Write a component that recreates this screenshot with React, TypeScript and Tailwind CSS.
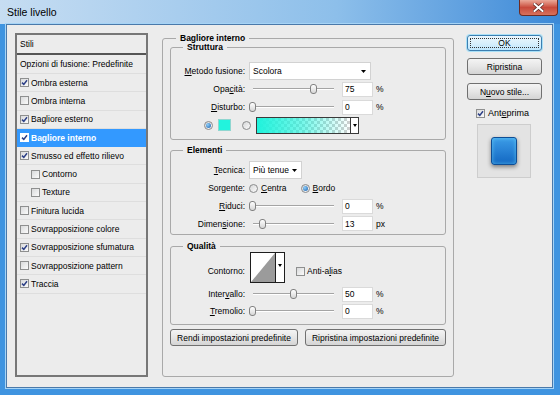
import React from "react";

const Check = ({ on, light }: { on: boolean; light?: boolean }) => (
  <span
    className={
      "w-[9px] h-[9px] shrink-0 flex items-center justify-center border " +
      (light ? "border-white bg-white" : "border-[#8e8f8f] bg-linear-to-br from-[#d9dadb] to-[#fbfbfb]")
    }
  >
    {on && (
      <svg width="7" height="7" viewBox="0 0 7 7">
        <path d="M1 3.6 L2.8 5.4 L6 1.2" stroke="#2c3f86" strokeWidth="1.5" fill="none" />
      </svg>
    )}
  </span>
);

const Radio = ({ on }: { on: boolean }) => (
  <span className="w-[9px] h-[9px] shrink-0 rounded-full border border-[#8a8b8c] bg-linear-to-br from-[#d6d7d8] to-[#fbfbfb] flex items-center justify-center">
    {on && <span className="w-[5px] h-[5px] rounded-full bg-[radial-gradient(circle_at_35%_35%,#8fd0fa,#1a5fae)]" />}
  </span>
);

const Arrow = () => (
  <svg width="5" height="3" viewBox="0 0 5 3" className="shrink-0">
    <path d="M0 0 H5 L2.5 3 Z" fill="#000" />
  </svg>
);

const Slider = ({ pos }: { pos: number }) => (
  <div className="relative w-[89px] h-[14px] shrink-0">
    <div className="absolute left-[4px] right-[4px] top-[6px] h-[2px] border-t border-t-[#a4a4a4] border-b border-b-white" />
    <div
      className="absolute top-[2px] w-[7px] h-[10px] rounded-[3px] border border-[#818181] bg-linear-to-b from-white to-[#d6d6d6]"
      style={{ left: pos }}
    />
  </div>
);

const Num = ({ v, unit }: { v: string; unit: string }) => (
  <div className="flex items-center gap-[3px] ml-[4px]">
    <div className="w-[31px] h-[15px] bg-white border border-[#dadada] pl-[2px] flex items-center">{v}</div>
    <span>{unit}</span>
  </div>
);

const Label = ({ children }: { children: React.ReactNode }) => (
  <span className="w-[74px] shrink-0 text-right mr-[4px]">{children}</span>
);

const Btn = ({ children, cls }: { children: React.ReactNode; cls: string }) => (
  <div
    className={
      "h-[17px] flex items-center justify-center rounded-[3px] border border-[#707070] bg-linear-to-b from-[#f4f4f4] via-[#e6e6e6] to-[#d4d4d4] " +
      cls
    }
  >
    {children}
  </div>
);

const styles: [string, boolean, number, boolean?][] = [
  ["Ombra esterna", true, 0],
  ["Ombra interna", false, 0],
  ["Bagliore esterno", true, 0],
  ["Bagliore interno", true, 0, true],
  ["Smusso ed effetto rilievo", true, 0],
  ["Contorno", false, 1],
  ["Texture", false, 1],
  ["Finitura lucida", false, 0],
  ["Sovrapposizione colore", false, 0],
  ["Sovrapposizione sfumatura", true, 0],
  ["Sovrapposizione pattern", false, 0],
  ["Traccia", true, 0],
];

const legend = "ml-[12px] px-[4px] font-bold leading-[10px]";

export default function App() {
  return (
    <div className="w-[560px] h-[395px] flex flex-col bg-[#3f94e0] text-black text-[8.5px] leading-[10px] font-['Liberation_Sans',Arial,sans-serif] overflow-hidden">
      {/* title bar */}
      <div className="h-[24px] shrink-0 flex items-start justify-between bg-linear-to-r from-[#c6ddf2] via-[#8dbfea] via-60% to-[#3b89d7]">
        <span className="mt-[6px] ml-[7px] text-[10.5px] leading-[12px]">Stile livello</span>
        <div className="mr-[2px] w-[39px] h-[16px] rounded-b-[4px] border border-t-0 border-[#6e2b22] bg-linear-to-b from-[#eaa99a] via-[#c84a3c] to-[#d8715c] flex items-center justify-center">
          <svg width="11" height="9" viewBox="0 0 11 9">
            <path d="M1.5 1 L9.5 8 M9.5 1 L1.5 8" stroke="#5a2620" strokeWidth="3.4" strokeLinecap="square" />
            <path d="M1.5 1 L9.5 8 M9.5 1 L1.5 8" stroke="#fff" strokeWidth="2" strokeLinecap="square" />
          </svg>
        </div>
      </div>

      {/* body */}
      <div className="flex-1 ml-[6px] mr-[7px] mb-[7px] border border-[#4a79aa] outline outline-[#a6d4f6] bg-[#ececec] pt-[8px] pl-[8px] flex items-start">
        {/* styles list */}
        <div className="w-[133px] h-[344px] shrink-0 border-2 border-[#777] flex flex-col">
          <div className="h-[20px] shrink-0 border-b-2 border-[#555] flex items-center pl-[3px]">Stili</div>
          <div className="h-[19px] shrink-0 border-b border-[#dedede] flex items-center pl-[3px]">
            Opzioni di fusione: Predefinite
          </div>
          {styles.map(([name, on, indent, sel]) => (
            <div
              key={name}
              className={
                "h-[18.3px] shrink-0 border-b flex items-center gap-[2px] " +
                (indent ? "pl-[14px] " : "pl-[3px] ") +
                (sel ? "bg-[#3399ff] border-[#3399ff] text-white font-bold" : "border-[#dedede]")
              }
            >
              <Check on={on} light={sel} />
              <span>{name}</span>
            </div>
          ))}
        </div>

        {/* main group */}
        <fieldset className="ml-[14px] w-[292px] h-[344px] shrink-0 min-w-0 border border-[#a9a9a9] rounded-[3px] px-[7px]">
          <legend className="ml-[6px] px-[4px] font-bold leading-[10px]">Bagliore interno</legend>

          <fieldset className="-mt-[1px] min-w-0 border border-[#a9a9a9] rounded-[3px] pt-[10px] pb-[5px]">
            <legend className={legend}>Struttura</legend>
            <div className="h-[18px] flex items-center">
              <Label>
                <u>M</u>etodo fusione:
              </Label>
              <div className="w-[122px] h-[18px] bg-white border border-[#d2d2d2] flex items-center justify-between pl-[3px] pr-[4px]">
                <span>Scolora</span>
                <Arrow />
              </div>
            </div>
            <div className="h-[18px] flex items-center">
              <Label>
                Opa<u>c</u>ità:
              </Label>
              <Slider pos={61} />
              <Num v="75" unit="%" />
            </div>
            <div className="h-[18px] flex items-center">
              <Label>
                <u>D</u>isturbo:
              </Label>
              <Slider pos={0} />
              <Num v="0" unit="%" />
            </div>
            <div className="h-[18px] flex items-center pl-[33px]">
              <Radio on={true} />
              <span className="ml-[5px] w-[13px] h-[12px] bg-[#22f3dd] border border-[#8fd6d0]" />
              <span className="ml-[11px]">
                <Radio on={false} />
              </span>
              <div className="ml-[5px] w-[103px] h-[17px] border border-[#3a3a3a] flex">
                <div className="flex-1 bg-[conic-gradient(#cfcfcf_25%,#ffffff_0_50%,#cfcfcf_0_75%,#ffffff_0)] bg-[length:6px_6px]">
                  <div className="w-full h-full bg-linear-to-r from-[#1ff3dc] via-[#1ff3dc]/60 to-transparent" />
                </div>
                <div className="w-[8px] border-l border-[#3a3a3a] bg-white flex items-center justify-center">
                  <svg width="4" height="3" viewBox="0 0 4 3">
                    <path d="M0 0 H4 L2 3 Z" fill="#000" />
                  </svg>
                </div>
              </div>
            </div>
          </fieldset>

          <fieldset className="mt-[5px] min-w-0 border border-[#a9a9a9] rounded-[3px] pt-[6px] pb-[2px]">
            <legend className={legend}>Elementi</legend>
            <div className="h-[18px] flex items-center">
              <Label>
                <u>T</u>ecnica:
              </Label>
              <div className="w-[53px] h-[18px] bg-white border border-[#d2d2d2] flex items-center justify-between pl-[3px] pr-[4px]">
                <span>Più tenue</span>
                <Arrow />
              </div>
            </div>
            <div className="h-[18px] flex items-center">
              <Label>Sorgente:</Label>
              <Radio on={false} />
              <span className="ml-[3px]">
                <u>C</u>entra
              </span>
              <span className="ml-[14px]">
                <Radio on={true} />
              </span>
              <span className="ml-[3px]">
                <u>B</u>ordo
              </span>
            </div>
            <div className="h-[18px] flex items-center">
              <Label>
                <u>R</u>iduci:
              </Label>
              <Slider pos={0} />
              <Num v="0" unit="%" />
            </div>
            <div className="h-[17px] flex items-center">
              <Label>
                Dimen<u>s</u>ione:
              </Label>
              <Slider pos={10} />
              <Num v="13" unit="px" />
            </div>
          </fieldset>

          <fieldset className="mt-[6px] min-w-0 border border-[#a9a9a9] rounded-[3px] pt-[1px] pb-[5px]">
            <legend className={legend}>Qualità</legend>
            <div className="h-[31px] flex items-center">
              <span className="mt-[7px] flex">
                <Label>Contorno:</Label>
              </span>
              <div className="ml-[1px] w-[35px] h-[31px] border border-[#1e1e1e] bg-white flex">
                <svg width="24" height="29" viewBox="0 0 24 29" className="shrink-0">
                  <path d="M0 29 L24 0 L24 29 Z" fill="#9b9b9b" />
                </svg>
                <div className="flex-1 border-l border-[#1e1e1e] flex items-center justify-center pb-[4px]">
                  <svg width="4" height="3" viewBox="0 0 4 3">
                    <path d="M0 0 H4 L2 3 Z" fill="#000" />
                  </svg>
                </div>
              </div>
              <div className="mt-[7px] ml-[11px] flex items-center gap-[2px]">
                <Check on={false} />
                <span>
                  Anti-a<u>l</u>ias
                </span>
              </div>
            </div>
            <div className="mt-[2px] h-[18px] flex items-center">
              <Label>
                Inter<u>v</u>allo:
              </Label>
              <Slider pos={41} />
              <Num v="50" unit="%" />
            </div>
            <div className="h-[16px] flex items-center">
              <Label>
                <u>T</u>remolio:
              </Label>
              <Slider pos={0} />
              <Num v="0" unit="%" />
            </div>
          </fieldset>

          <div className="mt-[4px] flex gap-[7px]">
            <Btn cls="w-[128px]">Rendi impostazioni predefinite</Btn>
            <Btn cls="w-[141px]">Ripristina impostazioni predefinite</Btn>
          </div>
        </fieldset>

        {/* right column */}
        <div className="ml-[13px] mt-[2px] w-[75px] shrink-0 flex flex-col">
          <div className="h-[16px] rounded-[3px] border border-[#3c7fb1] bg-linear-to-b from-[#eaf6fd] via-[#d9f0fc] to-[#bee6fd] p-[2px] shadow-[0_0_0_1px_#a9e0f7]">
            <div className="w-full h-full border border-dotted border-[#333] flex items-center justify-center">OK</div>
          </div>
          <Btn cls="mt-[7px] h-[16px]">Ripristina</Btn>
          <Btn cls="mt-[8px] h-[16px]">
            N<u>u</u>ovo stile...
          </Btn>
          <div className="mt-[8px] pl-[9px] flex items-center gap-[3px]">
            <Check on={true} />
            <span className="text-[9px]">
              Ant<u>e</u>prima
            </span>
          </div>
          <div className="mt-[6px] ml-[10px] w-[54px] h-[54px] bg-[#e3e3e3] border border-[#cdcdcd] flex items-center justify-center">
            <div className="w-[26px] h-[28px] rounded-[3px] border border-[#0e4e96] bg-linear-to-b from-[#3c9ce7] to-[#1267c2] shadow-[0_2px_4px_rgba(0,0,0,0.45),inset_0_0_4px_rgba(120,230,255,0.6)]" />
          </div>
        </div>
      </div>
    </div>
  );
}
